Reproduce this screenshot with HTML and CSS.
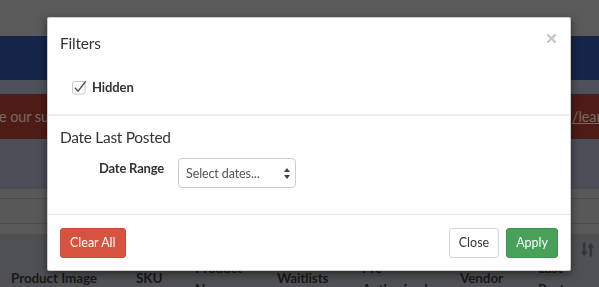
FILE: index.html
```html
<!DOCTYPE html>
<html lang="en">
<head>
<meta charset="utf-8">
<title>Filters</title>
<link rel="stylesheet" href="styles.css">
</head>
<body>
<div class="page">
  <div class="topbar"></div>
  <div class="navbar"></div>
  <div class="strip"></div>
  <div class="alert">
    <span class="alert-text">e our suggestions for listing products, please visit</span>
    <a class="alert-link" href="#">/learn</a>
  </div>
  <div class="band"></div>
  <div class="toolbar"><div class="toolbar-row"></div></div>
  <table class="products">
    <colgroup>
      <col class="c1"><col class="c2"><col class="c3"><col class="c4"><col class="c5"><col class="c6"><col class="c7"><col class="c8">
    </colgroup>
    <thead>
      <tr>
        <th>Product Image</th>
        <th>SKU</th>
        <th>Product<br>Name</th>
        <th>Waitlists</th>
        <th>Pre<br>Authorized</th>
        <th>Vendor</th>
        <th>Last<br>Post</th>
        <th class="sort-cell">
          <svg class="sort-icon" width="13" height="15" viewBox="0 0 13 15">
            <path d="M3.2 0.5v10" stroke="currentColor" stroke-width="2.6"/>
            <path d="M0 9.5h6.4L3.2 14.5z" fill="currentColor"/>
            <path d="M9.8 14.5v-10" stroke="currentColor" stroke-width="2.6"/>
            <path d="M6.6 5.5h6.4L9.8 0.5z" fill="currentColor"/>
          </svg>
        </th>
      </tr>
    </thead>
  </table>
</div>

<div class="backdrop"></div>

<div class="modal" role="dialog">
  <div class="modal-header">
    <h4 class="modal-title">Filters</h4>
    <button class="close" type="button" aria-label="Close">
      <svg width="9" height="9" viewBox="0 0 9 9"><path d="M1 1l7 7M8 1L1 8" stroke="#c4c4c4" stroke-width="2.2" stroke-linecap="square"/></svg>
    </button>
  </div>
  <div class="section section-hidden">
    <label class="check-row">
      <svg class="checkbox" width="15" height="15" viewBox="0 0 15 15">
        <rect x="0.5" y="1.5" width="12.5" height="12.5" rx="2" fill="#fff" stroke="#c8c8c8"/>
        <path d="M3 7.8l3 3.3L13.8 1.2" fill="none" stroke="#555" stroke-width="1.4"/>
      </svg>
      <span class="check-label">Hidden</span>
    </label>
  </div>
  <div class="section section-date">
    <h4 class="section-title">Date Last Posted</h4>
    <div class="form-row">
      <label class="form-label">Date Range</label>
      <div class="select">
        <span>Select dates...</span>
        <svg width="6" height="11" viewBox="0 0 6 11"><path d="M3 0L6 4H0z M0 7h6L3 11z" fill="#444"/></svg>
      </div>
    </div>
  </div>
  <div class="modal-footer">
    <button class="btn btn-danger" type="button">Clear All</button>
    <button class="btn btn-default push" type="button">Close</button>
    <button class="btn btn-success" type="button">Apply</button>
  </div>
</div>
</body>
</html>
```

FILE: styles.css
```css
* { box-sizing: border-box; }

html, body {
  margin: 0;
  height: 287px;
  overflow: hidden;
}

body {
  font-family: Lato, "Noto Sans", sans-serif;
  color: #333;
  background: #b4b4b4;
}

.page {
  display: flex;
  flex-direction: column;
}

.topbar { height: 36px; background: #b4b4b4; }
.navbar { height: 44px; background: #2b4b92; }
.strip { height: 14px; background: #9ca2b2; }

.alert {
  height: 45px;
  background: #9a382c;
  display: flex;
  align-items: center;
  white-space: nowrap;
  overflow: hidden;
  font-size: 14.5px;
  letter-spacing: -0.1px;
  color: #f6cfc8;
}
.alert-text {
  flex: none;
  width: 573px;
  overflow: hidden;
  margin-left: -1px;
}
.alert-link { color: #f6cfc8; text-decoration: underline; }

.band { height: 50px; background: #969cac; }

.toolbar {
  height: 45px;
  background: #b2b2b2;
  padding-top: 9px;
}
.toolbar-row {
  height: 26px;
  border-top: 1px solid #9a9a9a;
  border-bottom: 1px solid #9a9a9a;
  background: #b0b0b0;
}

.products {
  width: 599px;
  border-collapse: collapse;
  table-layout: fixed;
  background: #9ea0a8;
}
.c1 { width: 126px; }
.c2 { width: 59px; }
.c3 { width: 82px; }
.c4 { width: 85px; }
.c5 { width: 98px; }
.c6 { width: 78px; }
.c7 { width: 44px; }
.c8 { width: 27px; }

.products th {
  height: 85px;
  padding: 4px 0 0 10px;
  text-align: left;
  vertical-align: middle;
  font-size: 13.5px;
  letter-spacing: -0.1px;
  line-height: 21px;
  font-weight: 700;
  color: #333;
  white-space: nowrap;
}
.products th:first-child { padding-left: 11px; }
.products th.sort-cell {
  vertical-align: top;
  padding: 8px 0 0 9px;
  color: #66686f;
}
.sort-icon { display: block; }

.backdrop {
  position: fixed;
  inset: 0;
  background: rgba(0, 0, 0, 0.5);
}

.modal {
  position: absolute;
  top: 17px;
  left: 47px;
  width: 524px;
  height: 254px;
  background: #fff;
  border: 1px solid rgba(0, 0, 0, 0.2);
  border-radius: 2px;
  box-shadow: 0 3px 9px rgba(0, 0, 0, 0.5);
  display: flex;
  flex-direction: column;
}

.modal-header {
  display: flex;
  justify-content: space-between;
  align-items: flex-start;
  padding: 12px 12px 0;
  height: 38px;
}
.modal-title {
  margin: 0;
  font-size: 15.5px;
  letter-spacing: -0.2px;
  line-height: 26px;
  font-weight: 400;
  color: #333;
}
.close {
  border: 0;
  background: none;
  padding: 0;
  margin: 4px 2px 0 0;
  line-height: 0;
  cursor: pointer;
}

.section-hidden {
  height: 60px;
  padding: 21px 0 0 24px;
  border-bottom: 2px solid #eee;
}
.check-row {
  display: flex;
  align-items: center;
  height: 20px;
  gap: 5px;
}
.checkbox { display: block; }
.check-label {
  font-size: 13px;
  letter-spacing: -0.1px;
  font-weight: 700;
  color: #333;
}

.section-date {
  height: 98px;
  padding: 8px 12px 0;
}
.section-title {
  margin: 0;
  font-size: 15.5px;
  letter-spacing: -0.3px;
  line-height: 26px;
  font-weight: 400;
  color: #333;
}
.form-row {
  display: flex;
  align-items: flex-start;
  margin-top: 8px;
}
.form-label {
  width: 104px;
  text-align: right;
  font-size: 13px;
  letter-spacing: -0.2px;
  line-height: 20px;
  font-weight: 700;
  color: #333;
}
.select {
  margin-left: 14px;
  width: 118px;
  height: 30px;
  border: 1px solid #ccc;
  border-radius: 4px;
  padding: 0 5px 0 7px;
  display: flex;
  align-items: center;
  justify-content: space-between;
  font-size: 12.5px;
  letter-spacing: -0.1px;
  color: #555;
}

.modal-footer {
  flex: 1;
  border-top: 1px solid #e5e5e5;
  padding: 13px 12px 0;
  display: flex;
  align-items: flex-start;
  gap: 7px;
}
.push { margin-left: auto; }

.btn {
  height: 30px;
  padding: 0 9px;
  font-family: inherit;
  font-size: 12.5px;
  line-height: 28px;
  border: 1px solid transparent;
  border-radius: 3px;
  cursor: pointer;
}
.btn-danger { background: #d5533f; border-color: #c9493a; color: #fff; }
.btn-default { background: #fff; border-color: #d6d6d6; color: #333; }
.btn-success { background: #47a15b; border-color: #3f9452; color: #fff; }
```
